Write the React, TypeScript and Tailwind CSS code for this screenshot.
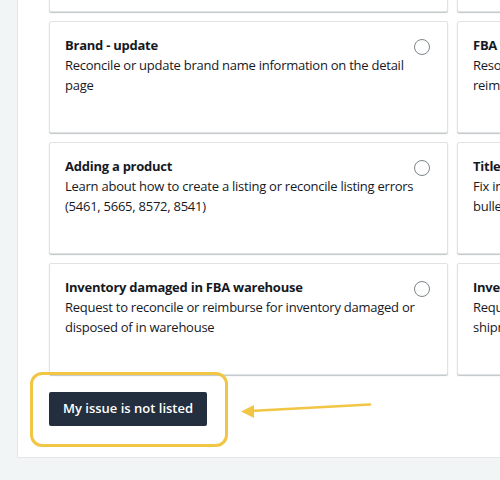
import React from 'react';

interface Issue {
  title: string;
  desc: string;
}

const left: Issue[] = [
  { title: 'Category - update', desc: 'Reconcile or update category information' },
  { title: 'Brand - update', desc: 'Reconcile or update brand name information on the detail page' },
  { title: 'Adding a product', desc: 'Learn about how to create a listing or reconcile listing errors (5461, 5665, 8572, 8541)' },
  { title: 'Inventory damaged in FBA warehouse', desc: 'Request to reconcile or reimburse for inventory damaged or disposed of in warehouse' },
];

const right: Issue[] = [
  { title: 'Images - update', desc: 'Update or fix the main and additional images on the detail page' },
  { title: 'FBA inventory lost in warehouse', desc: 'Resolve inventory discrepancies or request a reconcile or reimbursement for lost units' },
  { title: 'Title - update', desc: 'Fix incorrect information in the product title, description and bullet points' },
  { title: 'Inventory lost in inbound shipment', desc: 'Request to reconcile or reimburse for inventory lost in shipment to a fulfillment center' },
];

function IssueCard({ issue }: { issue: Issue }) {
  return (
    <div className="relative h-[112px] rounded-[2px] border border-[#dfe3e3] bg-white px-[15px] pt-[13px] shadow-[0_1px_1px_0_rgba(0,28,36,0.25)]">
      <span className="absolute right-[17px] top-[17px] h-[16px] w-[16px] rounded-full border-[1.5px] border-[#7b8587]" />
      <h3 className="whitespace-nowrap text-[13px] font-bold leading-[20px] tracking-[-0.25px] text-[#16191f]">
        {issue.title}
      </h3>
      <p className="pr-[14px] text-[13px] leading-[20px] tracking-[-0.25px] text-[#16191f]">{issue.desc}</p>
    </div>
  );
}

export default function App() {
  return (
    <div className="relative h-[480px] w-[500px] overflow-hidden bg-[#f2f5f6] font-['Open_Sans',sans-serif]">
      <div className="ml-[17px] w-[600px] border-b border-l border-[#e3e7e8] bg-white pb-[31px] pl-[31px]">
        <div className="-mt-[100px] grid grid-cols-[399px_399px] gap-x-[9px] gap-y-[9px]">
          {left.map((issue, i) => (
            <React.Fragment key={issue.title}>
              <IssueCard issue={issue} />
              <IssueCard issue={right[i]} />
            </React.Fragment>
          ))}
        </div>
        <button className="mt-[17px] h-[34px] rounded-[2px] bg-[#232f3e] px-[14px] text-[13px] font-semibold text-white">
          My issue is not listed
        </button>
      </div>

      {/* yellow callout drawn over the page */}
      <div className="absolute left-[30px] top-[372px] h-[75px] w-[198px] rounded-[12px] border-[3px] border-[#f1c644]" />
      <svg className="absolute left-0 top-0" width="500" height="480" viewBox="0 0 500 480">
        <line x1="370" y1="404.5" x2="250" y2="411" stroke="#f1c644" strokeWidth="2.5" strokeLinecap="round" />
        <polygon points="241,411.5 254,405 254,418" fill="#f1c644" />
      </svg>
    </div>
  );
}
